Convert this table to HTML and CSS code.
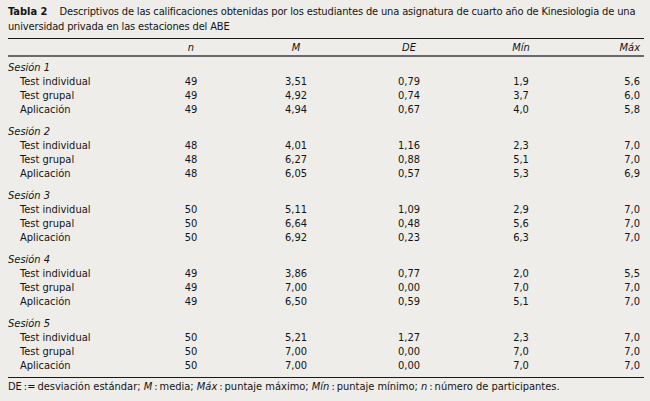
FILE: index.html
```html
<!DOCTYPE html>
<html lang="es">
<head>
<meta charset="utf-8">
<link rel="stylesheet" href="styles.css">
</head>
<body>
<div class="page">
  <div class="caption"><b class="tag">Tabla 2</b>Descriptivos de las calificaciones obtenidas por los estudiantes de una asignatura de cuarto año de Kinesiologia de una universidad privada en las estaciones del ABE</div>
  <div class="table">
    <div class="row head">
      <span></span><span class="c">n</span><span class="c">M</span><span class="c">DE</span><span class="c">Mín</span><span class="r">Máx</span>
    </div>
    <div class="body">
      <div class="group">
        <div class="row"><span class="sess">Sesión 1</span></div>
        <div class="row"><span class="lbl">Test individual</span><span class="c">49</span><span class="c">3,51</span><span class="c">0,79</span><span class="c">1,9</span><span class="r">5,6</span></div>
        <div class="row"><span class="lbl">Test grupal</span><span class="c">49</span><span class="c">4,92</span><span class="c">0,74</span><span class="c">3,7</span><span class="r">6,0</span></div>
        <div class="row"><span class="lbl">Aplicación</span><span class="c">49</span><span class="c">4,94</span><span class="c">0,67</span><span class="c">4,0</span><span class="r">5,8</span></div>
      </div>
      <div class="group">
        <div class="row"><span class="sess">Sesión 2</span></div>
        <div class="row"><span class="lbl">Test individual</span><span class="c">48</span><span class="c">4,01</span><span class="c">1,16</span><span class="c">2,3</span><span class="r">7,0</span></div>
        <div class="row"><span class="lbl">Test grupal</span><span class="c">48</span><span class="c">6,27</span><span class="c">0,88</span><span class="c">5,1</span><span class="r">7,0</span></div>
        <div class="row"><span class="lbl">Aplicación</span><span class="c">48</span><span class="c">6,05</span><span class="c">0,57</span><span class="c">5,3</span><span class="r">6,9</span></div>
      </div>
      <div class="group">
        <div class="row"><span class="sess">Sesión 3</span></div>
        <div class="row"><span class="lbl">Test individual</span><span class="c">50</span><span class="c">5,11</span><span class="c">1,09</span><span class="c">2,9</span><span class="r">7,0</span></div>
        <div class="row"><span class="lbl">Test grupal</span><span class="c">50</span><span class="c">6,64</span><span class="c">0,48</span><span class="c">5,6</span><span class="r">7,0</span></div>
        <div class="row"><span class="lbl">Aplicación</span><span class="c">50</span><span class="c">6,92</span><span class="c">0,23</span><span class="c">6,3</span><span class="r">7,0</span></div>
      </div>
      <div class="group">
        <div class="row"><span class="sess">Sesión 4</span></div>
        <div class="row"><span class="lbl">Test individual</span><span class="c">49</span><span class="c">3,86</span><span class="c">0,77</span><span class="c">2,0</span><span class="r">5,5</span></div>
        <div class="row"><span class="lbl">Test grupal</span><span class="c">49</span><span class="c">7,00</span><span class="c">0,00</span><span class="c">7,0</span><span class="r">7,0</span></div>
        <div class="row"><span class="lbl">Aplicación</span><span class="c">49</span><span class="c">6,50</span><span class="c">0,59</span><span class="c">5,1</span><span class="r">7,0</span></div>
      </div>
      <div class="group">
        <div class="row"><span class="sess">Sesión 5</span></div>
        <div class="row"><span class="lbl">Test individual</span><span class="c">50</span><span class="c">5,21</span><span class="c">1,27</span><span class="c">2,3</span><span class="r">7,0</span></div>
        <div class="row"><span class="lbl">Test grupal</span><span class="c">50</span><span class="c">7,00</span><span class="c">0,00</span><span class="c">7,0</span><span class="r">7,0</span></div>
        <div class="row"><span class="lbl">Aplicación</span><span class="c">50</span><span class="c">7,00</span><span class="c">0,00</span><span class="c">7,0</span><span class="r">7,0</span></div>
      </div>
    </div>
    <div class="note">DE&#8201;:=&#8201;desviación estándar; <i>M</i>&#8201;:&#8201;media; <i>Máx</i>&#8201;:&#8201;puntaje máximo; <i>Mín</i>&#8201;:&#8201;puntaje mínimo; <i>n</i>&#8201;:&#8201;número de participantes.</div>
  </div>
</div>
</body>
</html>
```
FILE: styles.css
```css
html, body {
  margin: 0;
  padding: 0;
  background: #eeede9;
}
body {
  font-family: "DejaVu Sans Condensed", "DejaVu Sans", sans-serif;
  font-size: 11px;
  color: #141414;
}
.page {
  width: 650px;
  height: 401px;
  padding: 4px 6px 0 8px;
  box-sizing: border-box;
}
.caption {
  line-height: 15px;
  letter-spacing: -0.15px;
}
.tag {
  font-weight: bold;
  letter-spacing: 0;
  margin-right: 12px;
}
.table {
  margin-top: 4px;
  border-top: 1px solid #1a1a1a;
}
.row {
  display: grid;
  grid-template-columns: 132px 102px 108px 118px 106px 70px;
  height: 14px;
  line-height: 14px;
  align-items: center;
}
.head {
  height: 16px;
  line-height: 17px;
  border-bottom: 2px solid #6a6a6a;
  font-style: italic;
}
.body {
  padding: 4px 0 4px;
  display: flex;
  flex-direction: column;
  gap: 8px;
  border-bottom: 1px solid #1a1a1a;
}
.c { text-align: center; }
.r { text-align: right; padding-right: 4px; }
.sess {
  font-style: italic;
  white-space: nowrap;
}
.lbl {
  padding-left: 12px;
  white-space: nowrap;
}
.note {
  height: 14px;
  line-height: 14px;
  margin-top: 2px;
}
```
